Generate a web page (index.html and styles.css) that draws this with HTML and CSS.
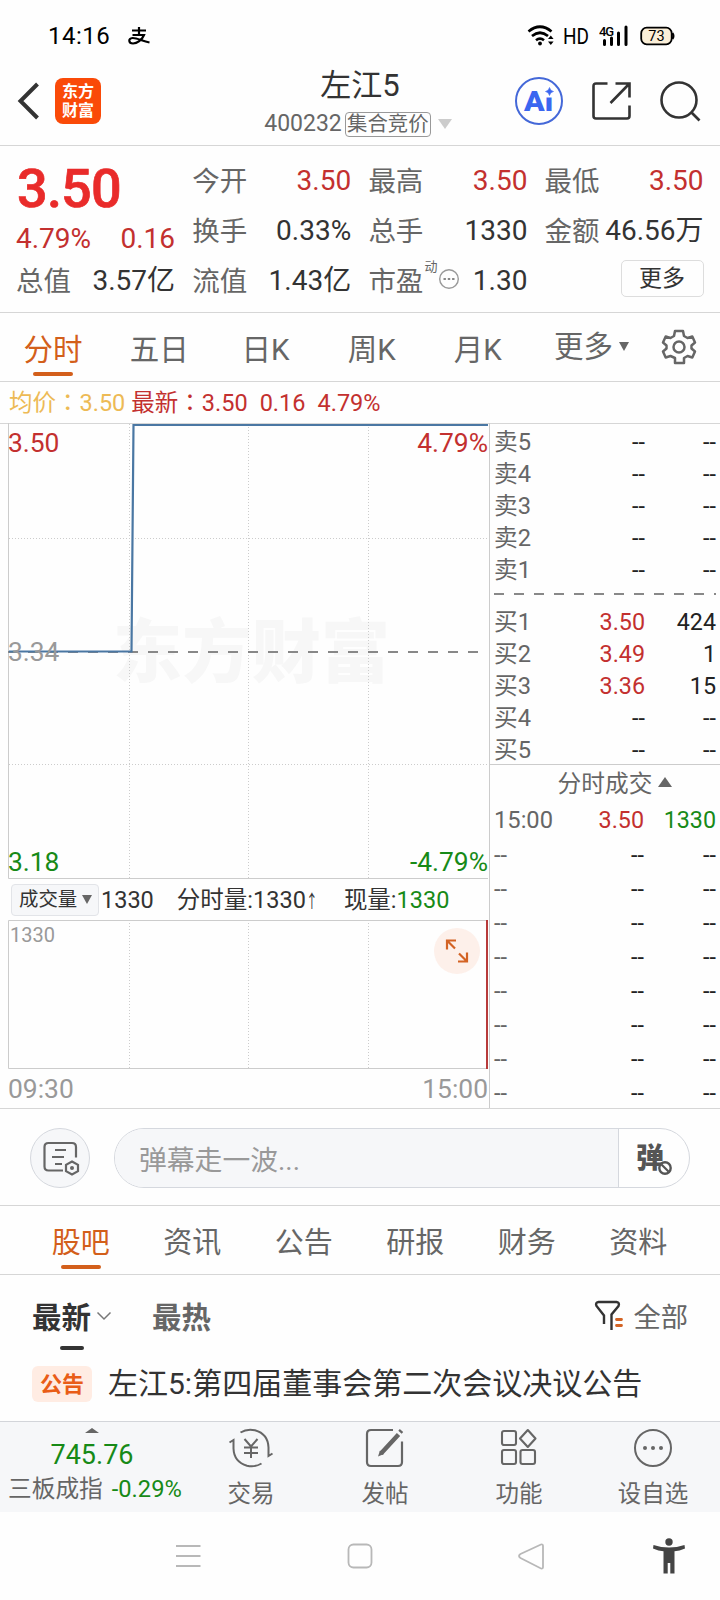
FILE: index.html
```html
<!DOCTYPE html>
<html lang="zh-CN">
<head>
<meta charset="utf-8">
<title>左江5</title>
<link rel="stylesheet" href="styles.css">
</head>
<body>
<div class="status">
  <span class="clock">14:16</span>
  <svg class="alipay" width="24" height="20" viewBox="0 0 24 20" fill="none" stroke="#000" stroke-width="2.2"><path d="M5 4.500H19M12 1V9M5.500 9H17C15 14 10 17.500 6 17.500C1.500 17.500 .8 12.500 5.500 12C10 11.700 15 15 22.500 16.500"/></svg>
  <div class="signals">
    <svg width="28" height="22" viewBox="0 0 28 22" fill="none" stroke="#000" stroke-width="2.7"><path d="M1.500 6.500Q13 -3 24.500 6.500M5 11Q13 4.500 21 11M9 15.200Q13 12 17 15.200"/><circle cx="13" cy="18.500" r="1.900" fill="#000" stroke="none"/><path d="M21 14l2.800-3.500L26.600 14zM21 16.500l2.800 3.500 2.800-3.500z" fill="#000" stroke="none"/></svg>
    <svg class="hd" width="26" height="22" viewBox="0 0 26 22"><text x="0" y="19" textLength="26" lengthAdjust="spacingAndGlyphs">HD</text></svg>
    <svg width="31" height="22" viewBox="0 0 31 22"><text x="0" y="10.500" class="g4" textLength="15">4G</text><path d="M5.500 15.500v4M12.500 13v6.500M19.500 8v11.500M27 2v17.500" stroke="#000" stroke-width="3" stroke-linecap="round"/></svg>
    <svg width="36" height="20" viewBox="0 0 36 20"><rect x="1.200" y="1.700" width="30.500" height="16.600" rx="5.500" fill="#fbefd8" stroke="#000" stroke-width="1.800"/><path d="M32.500 7q2 3 0 6" stroke="#000" stroke-width="2"/><text x="16.500" y="15.200" text-anchor="middle" class="bat">73</text></svg>
  </div>
</div>

<header class="header">
  <div class="head-left">
    <svg width="24" height="40" viewBox="0 0 24 40" fill="none" stroke="#333" stroke-width="4"><path d="M21.500 3L4.500 20L21.500 37"/></svg>
    <div class="logo"><span>东方</span><span>财富</span></div>
  </div>
  <div class="head-title">
    <div class="name">左江5</div>
    <div class="code"><span>400232</span><span class="tag">集合竞价</span><i class="tri-light"></i></div>
  </div>
  <div class="head-icons">
    <svg width="50" height="50" viewBox="0 0 50 50"><circle cx="25" cy="25" r="23" fill="none" stroke="#4468d8" stroke-width="2"/><text x="10" y="35" class="ai" textLength="29" lengthAdjust="spacingAndGlyphs">Ai</text><rect x="30" y="10" width="11" height="11.500" fill="#fff"/><path d="M35.500 11.500q.8 3.300 4 4q-3.200.7-4 4q-.8-3.300-4-4q3.200-.7 4-4z" fill="#3a66f0" stroke="#3a66f0" stroke-width=".6"/></svg>
    <svg width="42" height="42" viewBox="0 0 42 42" fill="none" stroke="#333" stroke-width="2.600"><path d="M16.500 3.500H5Q2.500 3.500 2.500 6V36Q2.500 38.500 5 38.500H36Q38.500 38.500 38.500 36V25.500M24.500 3.500H38.500V17.500M38.500 3.500L19.500 23"/></svg>
    <svg width="44" height="44" viewBox="0 0 44 44" fill="none" stroke="#333" stroke-width="2.600"><circle cx="20" cy="20" r="17.500"/><path d="M32.500 32.500L40.500 40.500"/></svg>
  </div>
</header>

<section class="quote">
  <div class="q-main">
    <div class="price">3.50</div>
    <div class="chg"><span>4.79%</span><span>0.16</span></div>
    <div class="kv"><span>总值</span><b>3.57亿</b></div>
  </div>
  <div class="q-col">
    <div class="kv"><span>今开</span><b class="red">3.50</b></div>
    <div class="kv"><span>换手</span><b>0.33%</b></div>
    <div class="kv"><span>流值</span><b>1.43亿</b></div>
  </div>
  <div class="q-col">
    <div class="kv"><span>最高</span><b class="red">3.50</b></div>
    <div class="kv"><span>总手</span><b>1330</b></div>
    <div class="kv"><span class="pe">市盈<sup>动</sup><svg width="22" height="22" viewBox="0 0 22 22"><circle cx="11" cy="11" r="9.300" fill="none" stroke="#999" stroke-width="1.400"/><path d="M5.500 11h2.400M9.800 11h2.400M14.100 11h2.400" stroke="#888" stroke-width="2.200"/></svg></span><b>1.30</b></div>
  </div>
  <div class="q-col">
    <div class="kv"><span>最低</span><b class="red">3.50</b></div>
    <div class="kv"><span>金额</span><b>46.56万</b></div>
    <div class="kv end"><span class="more">更多</span></div>
  </div>
</section>

<nav class="periods">
  <span class="on">分时</span><span>五日</span><span>日K</span><span>周K</span><span>月K</span>
  <span class="pmore">更多<i class="tri-down"></i></span>
  <svg width="40" height="40" viewBox="0 0 40 40" fill="none" stroke="#666" stroke-width="2.500" stroke-linejoin="round"><path d="M16 4H24L25 9L28.500 11L33.300 9.500L36 15.500L32.500 18.500V21.500L36 24.500L33.300 30.500L28.500 29L25 31V36H16V31L11.500 29L6.700 30.500L4 24.500L7.500 21.500V18.500L4 15.500L6.700 9.500L11.500 11L15 9Z"/><circle cx="20" cy="20" r="5.500"/></svg>
</nav>

<div class="legend"><span class="avg">均价<i class="colon" lang="zh-TW">：</i>3.50</span><span>最新<i class="colon" lang="zh-TW">：</i>3.50</span><span>0.16</span><span>4.79%</span></div>

<main class="board">
  <div class="charts">
    <svg class="line-chart" width="489" height="456" viewBox="0 0 489 456">
      <text x="113" y="254" class="watermark" textLength="277">东方财富</text>
      <g fill="none" stroke="#ccc">
        <path d="M129.500 1V455M248.500 1V455M368.500 1V455M9 115.500H488M9 341.500H488" stroke-dasharray="1 2"/>
        <path d="M8.500 0V455.500H488"/>
      </g>
      <path d="M8 229H479" stroke="#888" stroke-width="2" stroke-dasharray="10 10"/>
      <path d="M9 228.500H131.500L133.500 2H488" fill="none" stroke="#4a77a3" stroke-width="2.200"/>
      <g class="axis">
        <text x="8" y="29" fill="#c3302f">3.50</text><text x="488" y="29" text-anchor="end" fill="#c3302f">4.79%</text>
        <text x="8" y="238" fill="#999">3.34</text>
        <text x="8" y="448" fill="#178a17">3.18</text><text x="488" y="448" text-anchor="end" fill="#178a17">-4.79%</text>
      </g>
    </svg>
    <div class="vol-legend">
      <span class="picker">成交量<i class="tri-down"></i></span><span class="v1">1330</span><span class="v2">分时量:1330<small>↑</small></span><span>现量:<em>1330</em></span>
    </div>
    <svg class="vol-chart" width="489" height="149" viewBox="0 0 489 149">
      <path d="M129.500 3V148M248.500 3V148M368.500 3V148" stroke="#ccc" stroke-dasharray="1 2"/>
      <path d="M488 .5H8.500V148.500H488" fill="none" stroke="#ccc"/>
      <path d="M487 0V149" stroke="#b73a3a" stroke-width="2"/>
      <text x="10" y="22" class="vmax">1330</text>
      <circle cx="457" cy="31" r="23" fill="#fdf0ea"/>
      <path d="M456 20.500H447V29.500M447 20.500L455 28.500M459 33.500L467 41.500M458 41.500H467V32.500" fill="none" stroke="#d36324" stroke-width="2.200"/>
    </svg>
    <div class="times"><span>09:30</span><span>15:00</span></div>
  </div>
  <div class="book">
    <div class="rows sell">
      <div><span>卖5</span><b>--</b><b>--</b></div><div><span>卖4</span><b>--</b><b>--</b></div><div><span>卖3</span><b>--</b><b>--</b></div><div><span>卖2</span><b>--</b><b>--</b></div><div><span>卖1</span><b>--</b><b>--</b></div>
    </div>
    <svg class="dash" width="222" height="4" viewBox="0 0 222 4"><path d="M0 2H222" stroke="#888" stroke-width="2" stroke-dasharray="10 10"/></svg>
    <div class="rows buy">
      <div><span>买1</span><b class="red">3.50</b><b>424</b></div><div><span>买2</span><b class="red">3.49</b><b>1</b></div><div><span>买3</span><b class="red">3.36</b><b>15</b></div><div><span>买4</span><b>--</b><b>--</b></div><div><span>买5</span><b>--</b><b>--</b></div>
    </div>
    <div class="ticks-head">分时成交<i class="tri-up"></i></div>
    <div class="rows ticks">
      <div><span>15:00</span><b class="red">3.50</b><b class="green">1330</b></div>
      <div><span>--</span><b>--</b><b>--</b></div><div><span>--</span><b>--</b><b>--</b></div><div><span>--</span><b>--</b><b>--</b></div><div><span>--</span><b>--</b><b>--</b></div><div><span>--</span><b>--</b><b>--</b></div><div><span>--</span><b>--</b><b>--</b></div><div><span>--</span><b>--</b><b>--</b></div><div><span>--</span><b>--</b><b>--</b></div>
    </div>
  </div>
</main>

<section class="danmu">
  <div class="round"><svg width="38" height="36" viewBox="0 0 38 36" fill="none" stroke="#666" stroke-width="2.200"><path d="M21 29.500H6.500Q2.500 29.500 2.500 25.500V6Q2.500 2 6.500 2H30Q34 2 34 6V16.500M13 9H24M10 16H22M13 23H20"/><path d="M30 20.500L36 23.800V30.200L30 33.500L24 30.200V23.800Z"/><circle cx="30" cy="27" r="2" fill="#666" stroke="none"/></svg></div>
  <div class="input"><span class="ph">弹幕走一波...</span><span class="toggle">弹<svg width="16" height="16" viewBox="0 0 16 16"><circle cx="8" cy="8" r="5.700" fill="#fff" stroke="#555" stroke-width="2.400"/><path d="M4.500 4.500L11.500 11.500" stroke="#555" stroke-width="2.200"/></svg></span></div>
</section>

<nav class="sections"><span class="on">股吧</span><span>资讯</span><span>公告</span><span>研报</span><span>财务</span><span>资料</span></nav>

<section class="feed">
  <div class="sorts">
    <span class="s-on">最新</span>
    <svg class="chev" width="16" height="10" viewBox="0 0 16 10" fill="none" stroke="#777" stroke-width="1.500"><path d="M1.500 1.500L8 8L14.500 1.500"/></svg>
    <span class="s-hot">最热</span>
    <span class="filter"><svg width="30" height="32" viewBox="0 0 30 32" fill="none"><path d="M10 24V15.500L2.500 6Q1 2.500 4.500 2H22.500Q26 2.500 24.500 6L17.500 14.500V30" stroke="#333" stroke-width="2.400"/><path d="M22.500 19.500H27.500M22.500 25.500H27.500" stroke="#d36324" stroke-width="2.800" stroke-linecap="round"/></svg>全部</span>
  </div>
  <div class="post"><span class="badge">公告</span><span>左江5:第四届董事会第二次会议决议公告</span></div>
</section>

<nav class="bottom">
  <div class="index"><i class="tri-up"></i><div class="pts">745.76</div><div class="idx"><span>三板成指</span><em>-0.29%</em></div></div>
  <div class="act"><svg width="46" height="42" viewBox="0 0 46 42" fill="none" stroke="#666" stroke-width="2"><path d="M12.500 5.500Q19 1.500 27 3.300Q40 7 40.500 20.500V29L44.500 26.500M33.500 36.500Q27 40.500 19 38.700Q6 35 5.500 21.500V13L1.500 15.500M16.500 12L23 19.500L29.500 12M23 19.500V31M16 20.500H30M16 26H30"/></svg><span>交易</span></div>
  <div class="act"><svg width="42" height="42" viewBox="0 0 42 42" fill="none" stroke="#666" stroke-width="2.200"><path d="M29 3H7Q3 3 3 7V35Q3 39 7 39H34Q38 39 38 35V14.500"/><path d="M34.500 7.500L17 26.500M37.500 3.500L36 5.200" stroke-width="4.500"/><path d="M14 29.500L16 23.500L20 27Z" fill="#666" stroke="none"/></svg><span>发帖</span></div>
  <div class="act"><svg width="42" height="42" viewBox="0 0 42 42" fill="none" stroke="#666" stroke-width="2.100" stroke-linejoin="round"><rect x="4" y="4" width="14" height="14" rx="2"/><rect x="4" y="23" width="14" height="14" rx="2"/><rect x="22.500" y="23" width="14.500" height="14" rx="2"/><path d="M29.800 3L37.500 11.500L29.800 20L22 11.500Z"/></svg><span>功能</span></div>
  <div class="act"><svg width="42" height="42" viewBox="0 0 42 42"><circle cx="21" cy="21" r="18" fill="none" stroke="#666" stroke-width="2"/><g fill="#666"><circle cx="13" cy="21" r="2"/><circle cx="21" cy="21" r="2"/><circle cx="29" cy="21" r="2"/></g></svg><span>设自选</span></div>
</nav>

<svg class="sysnav" width="720" height="88" viewBox="0 0 720 88" fill="none" stroke="#b8b8b8" stroke-width="1.800">
  <path d="M176 34H200.500M176 44H200.500M176 54H200.500"/>
  <rect x="348.500" y="32.500" width="23" height="23" rx="5"/>
  <path d="M541 32.500L520.500 42Q517.500 44 520.500 46L541 56.500Q543 57 543 55V34Q543 32 541 32.500Z"/>
  <g fill="#444" stroke="none"><circle cx="669" cy="30" r="3.700"/><path d="M653.500 33Q669 38 684.500 33L685 36.500Q679.500 39 674.500 39.300V61.500H670.300V51H667.700V61.500H663.500V39.300Q658.500 39 653 36.500Z"/></g>
</svg>
</body>
</html>
```

FILE: styles.css
```css
* { box-sizing: border-box; }
body { margin: 0; width: 720px; height: 1600px; overflow: hidden; background: #fefefe; color: #333; font-family: Roboto, "Noto Sans CJK SC", sans-serif; font-weight: 400; }
b { font-weight: 400; }
em { font-style: normal; }
svg { display: block; flex: none; }
text { font-family: Roboto, "Noto Sans CJK SC", sans-serif; }
.red { color: #c3302f !important; }
.green { color: #178a17 !important; }
.tri-down { width: 0; height: 0; border: 5.5px solid transparent; border-top: 9px solid #666; border-bottom: 0; }
.tri-up { width: 0; height: 0; border: 7px solid transparent; border-bottom: 10px solid #666; border-top: 0; }

.status { height: 62px; padding: 10px 44px 0 48px; display: flex; align-items: center; color: #000; }
.clock { font-size: 24px; line-height: 30px; width: 79px; letter-spacing: .5px; }
.signals { margin-left: auto; display: flex; align-items: center; }
.signals svg + svg { margin-left: 10px; }
.signals .hd { margin-left: 8px; font-size: 22.5px; overflow: visible; }
.g4 { font-size: 13px; font-weight: 500; }
.bat { font-size: 14.5px; }

.header { height: 84px; border-bottom: 1px solid #d6d6d6; display: grid; grid-template-columns: 260px 200px 1fr; }
.head-left { display: flex; align-items: center; padding: 0 0 6px 16px; gap: 15px; }
.logo { width: 46px; height: 46px; border-radius: 8px; background: #fa4a08; color: #fff; font-weight: 700; font-size: 16px; line-height: 19px; display: flex; flex-direction: column; align-items: center; justify-content: center; }
.head-title { text-align: center; padding-top: 5px; }
.name { font-size: 31px; line-height: 38px; }
.code { display: flex; align-items: center; justify-content: center; font-size: 23px; line-height: 28px; color: #666; padding: 5px 0 0 0; height: 33px; margin-left: -4px; white-space: nowrap; }
.tag { border: 1.5px solid #999; border-radius: 4px; font-size: 20.4px; line-height: 23px; height: 25px; width: 86px; margin-left: 3px; display: flex; align-items: center; justify-content: center; }
.tri-light { flex: none; width: 0; height: 0; border: 7px solid transparent; border-top: 10px solid #ccc; border-bottom: 0; margin-left: 7px; }
.head-icons { display: flex; align-items: center; padding: 0 0 6px 54px; }
.head-icons svg:nth-child(2) { margin-left: 27px; }
.head-icons svg:nth-child(3) { margin-left: 26px; margin-top: 2px; }
.ai { font-size: 28px; font-weight: 900; fill: #3a66f0; }

.quote { height: 167px; border-bottom: 1px solid #d6d6d6; padding: 10px 16px 0 16px; display: grid; grid-template-columns: repeat(4, 159px); column-gap: 17.200px; font-size: 28px; }
.kv { display: flex; justify-content: space-between; align-items: center; height: 50px; line-height: 50px; white-space: nowrap; }
.kv span { color: #666; font-size: 27.5px; padding-top: 2px; }
.q-main { display: flex; flex-direction: column; }
.price { height: 64px; font-size: 54px; line-height: 66px; font-weight: 500; letter-spacing: -.8px; padding-left: 1px; -webkit-text-stroke: .7px #e92b2a; color: #e92b2a; }
.chg { height: 36px; line-height: 37px; display: flex; justify-content: space-between; color: #c3302f; }
.pe { position: relative; display: flex; align-items: center; }
.pe svg { margin-left: 15px; margin-top: -7px; }
.pe sup { position: absolute; left: 56px; top: 4px; font-size: 13px; line-height: 16px; }
.end { justify-content: flex-end; }
.kv .more { width: 83px; height: 37px; line-height: 35px; border: 1px solid #ddd; border-radius: 5px; font-size: 23px; text-align: center; color: #333; margin: -5px 0 0 0; padding: 0; }

.periods { height: 69px; border-bottom: 1px solid #d6d6d6; display: flex; align-items: stretch; font-size: 29.5px; line-height: 74px; color: #666; }
.periods span { width: 106.2px; text-align: center; position: relative; }
.periods .on::after, .sections .on::after { content: ""; position: absolute; left: 50%; margin-left: -20px; bottom: 5px; width: 40px; height: 4.5px; border-radius: 2px; background: #d35f1b; }
.on { color: #d35f1b; }
.periods .pmore { width: 128px; display: flex; align-items: center; gap: 6px; padding-left: 23px; line-height: 73px; }
.pmore .tri-down { margin-top: -2px; }
.periods svg { align-self: center; }

.legend { height: 42px; border-bottom: 1px solid #d6d6d6; padding-left: 9px; display: flex; font-size: 23.5px; line-height: 42px; color: #c3302f; }
.colon { font-style: normal; font-family: "Noto Sans CJK TC", sans-serif; line-height: 0; }
.avg { color: #edba55; margin-right: 6px; }
.legend span + span + span { margin-left: 12px; }

.board { height: 686px; margin-top: -1px; display: flex; border-bottom: 1px solid #d6d6d6; }
.charts { width: 489px; }
.watermark { font-size: 69px; font-weight: 900; fill: #f7f7f7; }
.axis { font-size: 26.4px; }
.line-chart { overflow: visible; }
.vol-legend { height: 41px; padding-left: 11px; display: flex; align-items: center; font-size: 23.5px; line-height: 42px; white-space: nowrap; }
.picker { display: flex; align-items: center; gap: 5px; width: 88px; height: 32px; line-height: 30px; padding-left: 7px; font-size: 19.4px; background: #f6f7f9; border: 1px solid #e2e4e8; border-radius: 4px; }
.v1 { margin: 0 23px 0 2px; }
.v2 { margin-right: 27px; }
.v2 small { font-size: 18px; display: inline-block; width: 11px; line-height: 20px; transform: scaleX(.65); transform-origin: 0 50%; }
.vol-legend em { color: #178a17; }
.vmax { font-size: 20px; fill: #999; }
.times { display: flex; justify-content: space-between; padding: 0 1px 0 8px; font-size: 26.4px; line-height: 40px; color: #999; }

.book { width: 231px; border-left: 1px solid #ccc; font-size: 23.7px; }
.rows > div { display: grid; grid-template-columns: 75px 76px 71px; height: 32px; line-height: 32px; padding-left: 4px; }
.rows b { text-align: right; color: #222; font-size: 23.3px; }
.rows span { color: #666; }
.sell { padding-top: 3px; height: 169px; }
.dash { margin: 0 0 0 4px; }
.buy { padding-top: 10px; height: 169px; border-bottom: 1px solid #ccc; }
.ticks-head { height: 37px; line-height: 40px; color: #666; display: flex; align-items: center; justify-content: center; gap: 6px; padding-left: 20px; }
.ticks-head .tri-up { margin-top: -4px; }
.ticks > div { height: 34px; line-height: 34px; grid-template-columns: 75px 75px 72px; }
.ticks > div:first-child { height: 36px; line-height: 36px; }

.danmu { height: 97px; border-bottom: 1px solid #d6d6d6; padding: 2px 30px 0; display: flex; align-items: center; }
.round { width: 60px; height: 60px; border: 1px solid #d5d8de; border-radius: 50%; background: #f6f7f9; display: flex; align-items: center; justify-content: center; padding: 2px 0 0 2px; }
.input { margin-left: 24px; width: 576px; height: 60px; border: 1px solid #d5d8de; border-radius: 30px; display: flex; overflow: hidden; }
.ph { width: 504px; padding-left: 24px; font-size: 27.8px; line-height: 63px; color: #999; background: #f6f7f9; border-right: 1px solid #d5d8de; }
.toggle { position: relative; flex: 1; padding-left: 17px; font-size: 28px; font-weight: 900; line-height: 59px; color: #555; }
.toggle svg { position: absolute; left: 38px; top: 31px; }

.sections { height: 69px; border-bottom: 1px solid #d6d6d6; display: flex; padding-left: 25px; font-size: 29px; line-height: 75px; color: #666; }
.sections span { width: 111.5px; text-align: center; position: relative; }

.feed { height: 146px; }
.sorts { position: relative; height: 85px; padding: 0 32px; display: flex; align-items: center; font-size: 29.5px; line-height: 86px; }
.s-on { font-weight: 700; position: relative; }
.s-on::after { content: ""; position: absolute; left: 28px; top: 71px; width: 24px; height: 4px; border-radius: 2px; background: #333; }
.chev { margin: 0 0 3px 5px; }
.s-hot { font-weight: 700; color: #666; margin-left: 40px; }
.filter { margin-left: auto; display: flex; align-items: center; gap: 9px; font-size: 27.3px; color: #666; }
.filter svg { margin-top: -3px; }
.post { height: 46px; padding-left: 32px; display: flex; align-items: center; gap: 16px; font-size: 30px; line-height: 46px; white-space: nowrap; margin-top: 1px; }
.badge { width: 60px; height: 36px; border-radius: 6px; background: #ffece3; color: #e95d17; font-size: 22px; font-weight: 700; line-height: 38px; text-align: center; }

.bottom { height: 91px; border-top: 1px solid #d3d5da; background: #f6f7f9; display: grid; grid-template-columns: 184px repeat(4, 134px); color: #666; }
.index { display: flex; flex-direction: column; align-items: center; padding-top: 6px; }
.index .tri-up { border-width: 0 7px 5px; }
.pts { font-size: 27px; line-height: 34px; margin-top: 5px; color: #178a17; }
.idx { display: flex; font-size: 23.7px; line-height: 34px; align-self: flex-start; padding-left: 8px; gap: 9px; white-space: nowrap; }
.idx em { color: #178a17; }
.act { display: flex; flex-direction: column; align-items: center; padding-top: 5px; font-size: 23.5px; line-height: 34px; }
.act span { margin-top: 8px; }
```
